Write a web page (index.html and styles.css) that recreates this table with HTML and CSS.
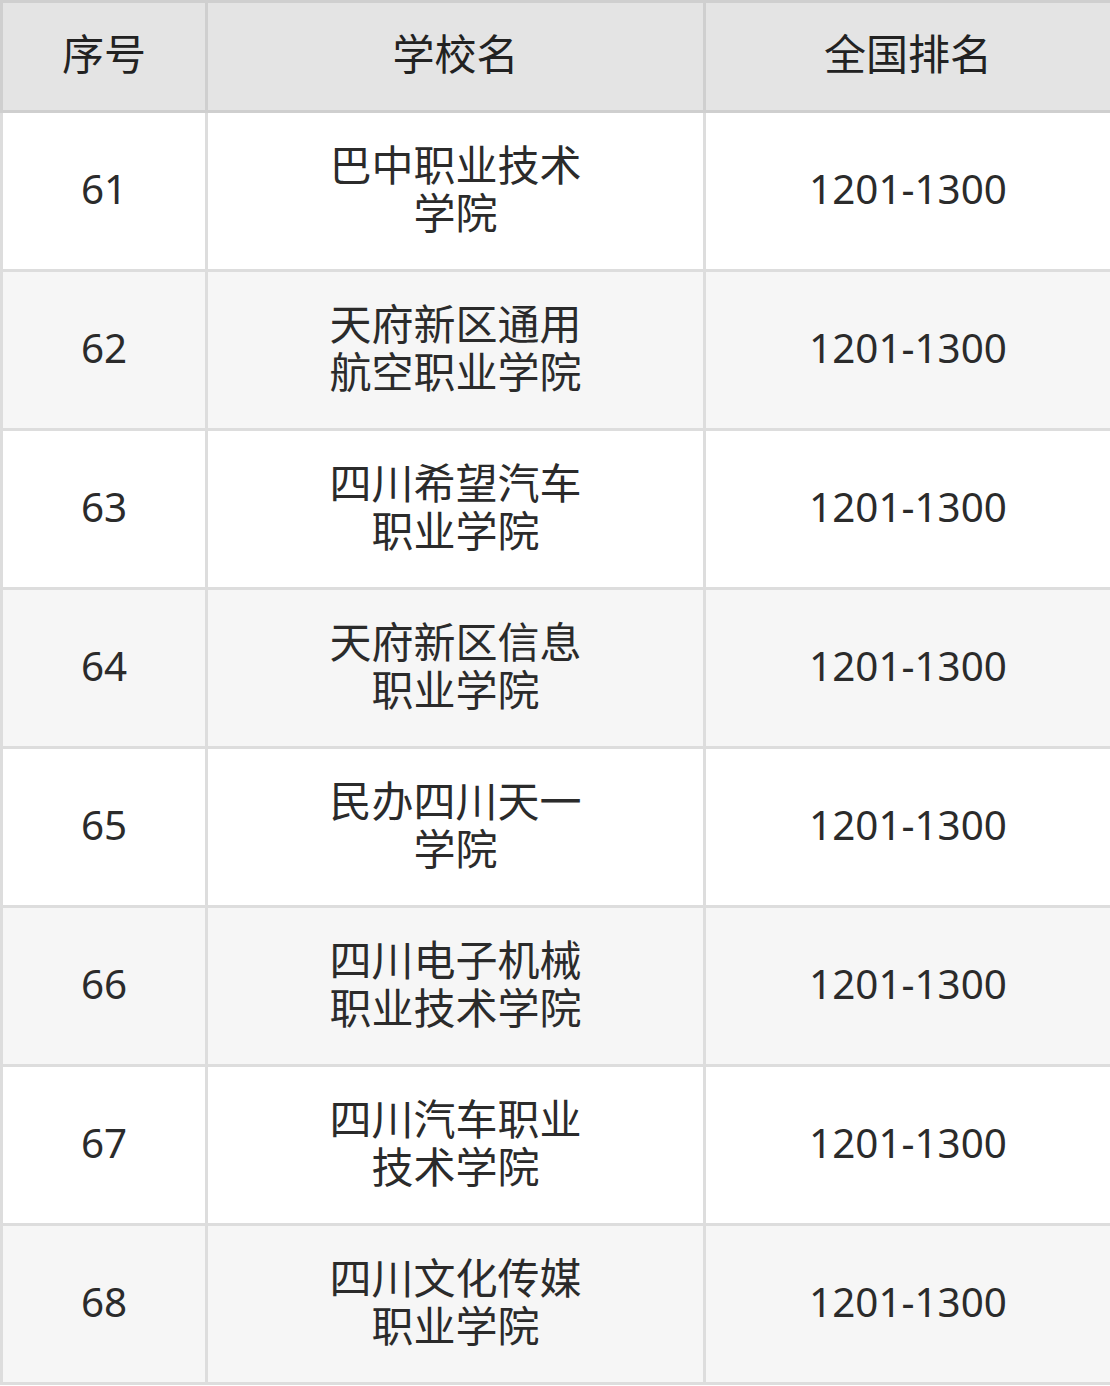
FILE: index.html
```html
<!DOCTYPE html>
<html lang="zh-CN">
<head>
<meta charset="utf-8">
<link rel="stylesheet" href="styles.css">
</head>
<body>
<table class="rank">
  <colgroup>
    <col class="c-no">
    <col class="c-name">
    <col class="c-rank">
  </colgroup>
  <thead>
    <tr><th>序号</th><th>学校名</th><th>全国排名</th></tr>
  </thead>
  <tbody>
    <tr><td>61</td><td><span class="nm">巴中职业技术学院</span></td><td>1201-1300</td></tr>
    <tr><td>62</td><td><span class="nm">天府新区通用航空职业学院</span></td><td>1201-1300</td></tr>
    <tr><td>63</td><td><span class="nm">四川希望汽车职业学院</span></td><td>1201-1300</td></tr>
    <tr><td>64</td><td><span class="nm">天府新区信息职业学院</span></td><td>1201-1300</td></tr>
    <tr><td>65</td><td><span class="nm">民办四川天一学院</span></td><td>1201-1300</td></tr>
    <tr><td>66</td><td><span class="nm">四川电子机械职业技术学院</span></td><td>1201-1300</td></tr>
    <tr><td>67</td><td><span class="nm">四川汽车职业技术学院</span></td><td>1201-1300</td></tr>
    <tr><td>68</td><td><span class="nm">四川文化传媒职业学院</span></td><td>1201-1300</td></tr>
  </tbody>
</table>
</body>
</html>
```

FILE: styles.css
```css
html, body {
  margin: 0;
  padding: 0;
  background: #ffffff;
}
.rank {
  width: 1110px;
  border-collapse: collapse;
  table-layout: fixed;
  font-family: "Noto Sans", "Noto Sans CJK SC", sans-serif;
  font-size: 40.4px;
  color: #2b2b2b;
}
.c-no { width: 205px; }
.c-name { width: 498px; }
.c-rank { width: 407px; }
.rank th {
  background: #e4e4e4;
  border: 3px solid #cfcfcf;
  height: 101px;
  font-weight: normal;
  font-size: 42px;
  color: #222222;
  text-align: center;
  vertical-align: middle;
  padding: 0 0 6px 0;
  line-height: 48px;
}
.rank td {
  border: 3px solid #dddddd;
  height: 152px;
  text-align: center;
  vertical-align: middle;
  padding: 0 0 4px 0;
  line-height: 48px;
}
.rank tbody tr:nth-child(even) td { background: #f6f6f6; }
.nm {
  display: inline-block;
  max-width: 6.2em;
  font-size: 42px;
}
```
